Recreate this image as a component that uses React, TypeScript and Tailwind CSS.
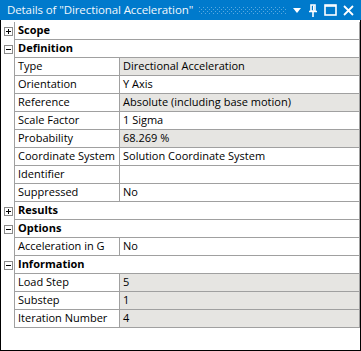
import React from "react";

type Row =
  | { kind: "group"; label: string; open: boolean }
  | { kind: "prop"; name: string; value: string; ro?: boolean };

const rows: Row[] = [
  { kind: "group", label: "Scope", open: false },
  { kind: "group", label: "Definition", open: true },
  { kind: "prop", name: "Type", value: "Directional Acceleration", ro: true },
  { kind: "prop", name: "Orientation", value: "Y Axis" },
  { kind: "prop", name: "Reference", value: "Absolute (including base motion)", ro: true },
  { kind: "prop", name: "Scale Factor", value: "1 Sigma" },
  { kind: "prop", name: "Probability", value: "68.269 %", ro: true },
  { kind: "prop", name: "Coordinate System", value: "Solution Coordinate System" },
  { kind: "prop", name: "Identifier", value: "" },
  { kind: "prop", name: "Suppressed", value: "No" },
  { kind: "group", label: "Results", open: false },
  { kind: "group", label: "Options", open: true },
  { kind: "prop", name: "Acceleration in G", value: "No" },
  { kind: "group", label: "Information", open: true },
  { kind: "prop", name: "Load Step", value: "5", ro: true },
  { kind: "prop", name: "Substep", value: "1", ro: true },
  { kind: "prop", name: "Iteration Number", value: "4", ro: true },
];

function Expander({ open }: { open: boolean }) {
  return (
    <svg width="9" height="9" viewBox="0 0 9 9" className="block">
      <rect x="0.5" y="0.5" width="8" height="8" fill="white" stroke="#8a8a8a" />
      <path d="M2 4.5h5" stroke="black" />
      {!open && <path d="M4.5 2v5" stroke="black" />}
    </svg>
  );
}

function TitleBar() {
  return (
    <div className="flex h-[20px] items-center bg-[#007acc] pl-[7px] pr-[7px] text-[11.5px] tracking-[-0.1px] text-[#f2f8fc]">
      <span className="whitespace-nowrap leading-none">Details of "Directional Acceleration"</span>
      <svg className="ml-[6px] h-[7px] flex-1" preserveAspectRatio="none">
        <defs>
          <pattern id="dots" width="4" height="4" patternUnits="userSpaceOnUse">
            <rect x="0" y="0" width="1" height="1" fill="#5aa9e0" />
            <rect x="2" y="2" width="1" height="1" fill="#5aa9e0" />
          </pattern>
        </defs>
        <rect width="100%" height="100%" fill="url(#dots)" />
      </svg>
      <div className="ml-[5px] flex items-center gap-[6px]">
        <svg width="10" height="10" viewBox="0 0 10 10">
          <path d="M1 3h8l-4 5z" fill="white" />
        </svg>
        <svg width="10" height="13" viewBox="0 0 10 13">
          <path d="M3 1h4v6H3z M1 7.5h8 M5 8v5" stroke="white" strokeWidth="1.6" fill="none" />
          <path d="M5.5 1.5v5" stroke="white" strokeWidth="1" />
        </svg>
        <svg width="13" height="12" viewBox="0 0 13 12">
          <rect x="1" y="1" width="11" height="10" stroke="white" strokeWidth="1.6" fill="none" />
          <path d="M1 2h11" stroke="white" strokeWidth="1.6" />
        </svg>
        <svg width="11" height="11" viewBox="0 0 11 11">
          <path d="M1 1l9 9M10 1l-9 9" stroke="white" strokeWidth="1.8" />
        </svg>
      </div>
    </div>
  );
}

export default function App() {
  return (
    <div className="flex h-[351px] w-[361px] flex-col bg-white font-['Open_Sans','Noto_Sans',sans-serif] text-[11px] text-black">
      <TitleBar />
      <div className="flex-1 border-x border-b border-black pt-[2px]">
        {rows.map((r, i) =>
          r.kind === "group" ? (
            <div key={i} className="flex h-[18px]">
              <div className="flex w-[13px] items-center justify-center pl-[1px]">
                <Expander open={r.open} />
              </div>
              <div className="flex flex-1 items-center border-b border-l border-r border-[#a0a0a0] pl-[3px] font-bold">
                {r.label}
              </div>
            </div>
          ) : (
            <div key={i} className="flex h-[18px]">
              <div className="w-[13px]" />
              <div className="flex w-[105px] items-center border-b border-l border-[#a0a0a0] pl-[3px] whitespace-nowrap">
                {r.name}
              </div>
              <div
                className={
                  "flex flex-1 items-center border-b border-l border-r border-[#a0a0a0] pl-[3px] whitespace-nowrap " +
                  (r.ro ? "bg-[#e6e5e2]" : "bg-white")
                }
              >
                {r.value}
              </div>
            </div>
          )
        )}
      </div>
    </div>
  );
}
